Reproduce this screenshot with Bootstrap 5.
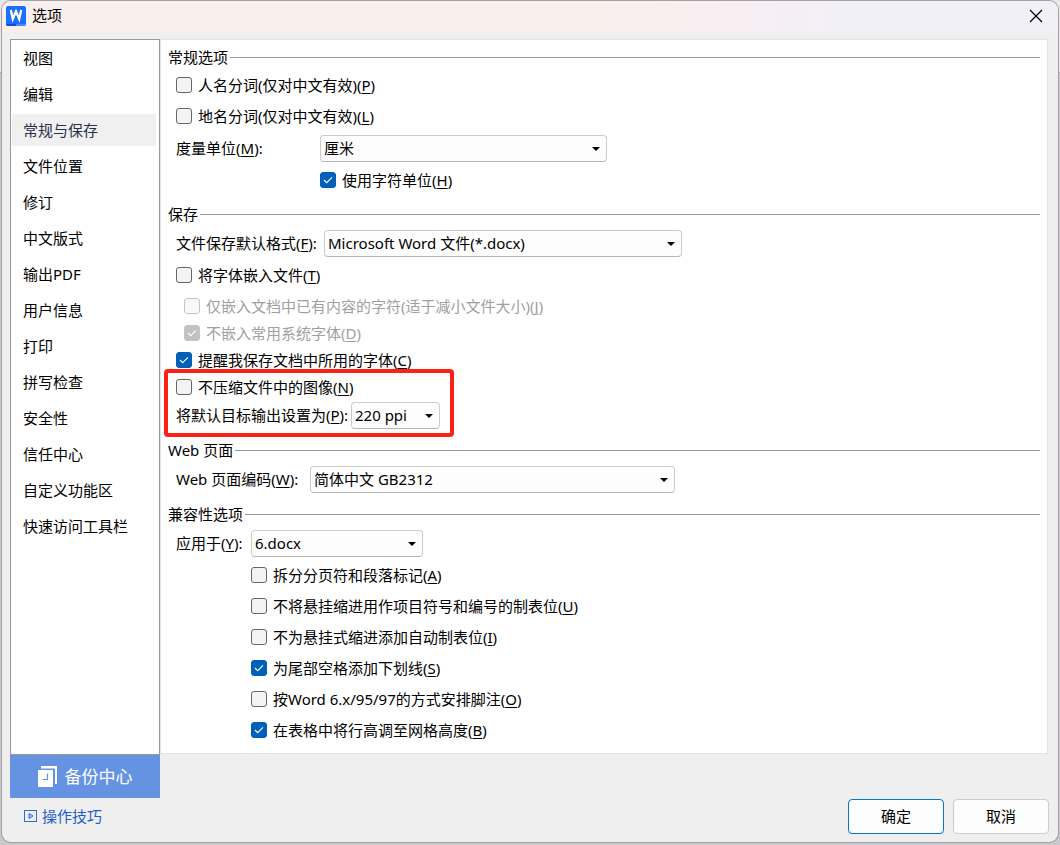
<!DOCTYPE html>
<html lang="zh-CN">
<head>
<meta charset="utf-8">
<meta name="viewport" content="width=device-width, initial-scale=1">
<title>选项</title>
<link href="https://cdn.jsdelivr.net/npm/bootstrap@5.3.0/dist/css/bootstrap.min.css" rel="stylesheet">
<style>
  body {
    font-family: "Noto Sans", "Noto Sans CJK SC", sans-serif;
    font-size: 15px;
    line-height: 20px;
    color: #000;
    padding: 1px 2px 3px;
    background: linear-gradient(#e9e8e9 72px, #a9a8aa 72px, #a9a8aa 73px, #c9c8ca 73px);
  }
  .dialog {
    min-height: calc(100vh - 4px);
    background: #efefef;
    border-radius: 9px;
    box-shadow: 0 0 0 1px #a3a1a3;
    overflow: hidden;
  }
  .titlebar {
    height: 31px;
    padding: 0 15px 2px 4px;
    background: linear-gradient(100deg, #f9f0ed 55%, #f9eef2 68%, #f1f0f7 80%);
  }
  .titlebar h1 { font-size: 15px; line-height: 20px; margin: 0 0 0 6px; padding-bottom: 2px; font-weight: 400; }
  .close-btn { border: 0; background: none; padding: 0; width: 14px; height: 30px; }
  .work { padding: 7px 10px 0 8px; }

  .side { width: 150px; }
  .cats { border: 1px solid #999; background: #fff; padding: 1px; }
  .cats .nav-link {
    color: #000;
    padding: 6px 11px;
    line-height: 20px;
    margin: 1px 2px 3px 0;
    border-radius: 0;
  }
  .cats .nav-link.active { background: #f0f0f0; color: #2a2f48; }
  .backup {
    height: 43px;
    border: 0;
    background: #6593e2;
    color: #fff;
    font-size: 17px;
    line-height: 24px;
  }
  .tips { height: 44px; padding: 0 0 8px 14px; color: #1f5fcb; text-decoration: none; gap: 4px; }

  .pane { background: #fff; border: 1px solid #e3e3e3; padding: 4px 7px 0; }
  .group { margin: 0 0 5px; }
  .group-title { height: 26px; margin: 0; font-size: 15px; line-height: 20px; font-weight: 400; white-space: nowrap; gap: 2px; }
  .group-title::after { content: ""; flex: 1; height: 1px; background: #999; }
  .rows { padding-left: 8px; }
  .tick { height: 31px; padding-bottom: 1px; gap: 6px; white-space: nowrap; }
  .tick.tight { height: 27px; }
  .tick.medium { height: 29px; padding-top: 1px; padding-bottom: 0; }
  .tick .form-check-input {
    width: 16px; height: 16px; margin: 0; flex: none;
    border: 1px solid #666; border-radius: 3px; background-color: #f3f3f3;
    opacity: 1;
  }
  .tick .form-check-input:checked {
    background-color: #005fb8; border-color: #005fb8;
    background-size: 16px 16px;
    background-image: url("data:image/svg+xml,%3Csvg xmlns='http://www.w3.org/2000/svg' viewBox='0 0 16 16'%3E%3Cpath d='M4 8l2.7 2.7L12 5.4' fill='none' stroke='%23fff' stroke-width='1.1'/%3E%3C/svg%3E");
  }
  .tick .form-check-input:disabled { border-color: #c4c4c4; background-color: #f9f9f9; }
  .tick .form-check-input:disabled:checked { background-color: #c1c1c1; }
  .tick .form-check-input:disabled ~ label { opacity: 1; color: #a0a0a0; }
  u { text-underline-offset: 2px; text-decoration-thickness: 1px; }
  .pick { padding: 3px 0; white-space: nowrap; }
  .pick label { padding-bottom: 2px; }
  .pick.snug { padding: 1px 0; }
  .pick .form-select {
    height: 27px;
    padding: 0 24px 1px 3px;
    font-size: 15px;
    line-height: 24px;
    color: #000;
    border: 1px solid #ccc;
    border-bottom-color: #b5b5b5;
    border-radius: 4px;
    background: #fdfdfd url("data:image/svg+xml,%3Csvg xmlns='http://www.w3.org/2000/svg' width='8' height='4'%3E%3Cpath d='M0 0h8L4 4z'/%3E%3C/svg%3E") no-repeat right 6px center / 8px 4px;
  }
  .unit label { width: 144px; }    .unit .form-select { width: 287px; }
  .format label { width: 148px; }  .format .form-select { width: 358px; }
  .ppi label { width: 175px; }     .ppi .form-select { width: 89px; }
  .enc label { width: 134px; }     .enc .form-select { width: 365px; }
  .target label { width: 75px; }   .target .form-select { width: 172px; }
  .under-unit { padding-left: 144px; }
  .under-embed { padding-left: 8px; }
  .under-target { padding-left: 75px; }

  .marked { position: relative; width: fit-content; margin-bottom: 7px; }
  .marked::after {
    content: "";
    position: absolute;
    inset: -5px -14px -7px -12px;
    border: 4px solid #ff2015;
    border-radius: 4px;
    pointer-events: none;
  }
  .actions { padding: 45px 0 8px; gap: 9px; margin-right: -1px; }
  .actions .btn {
    width: 96px; height: 35px; padding: 0 0 2px;
    font-size: 15px; line-height: 20px; color: #000;
    background: #fdfdfd; border: 1px solid #ccc; border-radius: 4px;
  }
  .actions .btn.default { border-color: #0078d4; }
</style>
</head>
<body>
<div class="dialog d-flex flex-column">
  <header class="titlebar d-flex align-items-center">
    <svg width="20" height="20" viewBox="0 0 20 20" aria-hidden="true">
      <rect width="20" height="20" rx="2" fill="#1d6ffb"/>
      <path d="M0 18h10v2H2a2 2 0 0 1-2-2z" fill="#0550dc"/>
      <path d="M10 18h10a2 2 0 0 1-2 2h-8z" fill="#4689ff"/>
      <path d="M4.800 4l2 9L10 5.500l3.200 7.500 2-9" fill="none" stroke="#fff" stroke-width="2.300"/>
    </svg>
    <h1>选项</h1>
    <button type="button" class="close-btn ms-auto d-flex align-items-center justify-content-center" aria-label="关闭">
      <svg width="14" height="14" viewBox="0 0 14 14"><path d="M1 1l12 12M13 1L1 13" stroke="#000" stroke-width="1.200"/></svg>
    </button>
  </header>

  <div class="work d-flex flex-grow-1">
    <aside class="side d-flex flex-column flex-shrink-0">
      <nav class="cats nav flex-column flex-nowrap flex-grow-1">
        <a class="nav-link" href="#">视图</a>
        <a class="nav-link" href="#">编辑</a>
        <a class="nav-link active" href="#" aria-current="page">常规与保存</a>
        <a class="nav-link" href="#">文件位置</a>
        <a class="nav-link" href="#">修订</a>
        <a class="nav-link" href="#">中文版式</a>
        <a class="nav-link" href="#">输出PDF</a>
        <a class="nav-link" href="#">用户信息</a>
        <a class="nav-link" href="#">打印</a>
        <a class="nav-link" href="#">拼写检查</a>
        <a class="nav-link" href="#">安全性</a>
        <a class="nav-link" href="#">信任中心</a>
        <a class="nav-link" href="#">自定义功能区</a>
        <a class="nav-link" href="#">快速访问工具栏</a>
      </nav>
      <button type="button" class="backup d-flex align-items-center justify-content-center gap-2">
        <svg width="19" height="21" viewBox="0 0 19 21" aria-hidden="true">
          <path d="M3 0h16v18h-2V2.500H3z" fill="#fff"/>
          <path d="M0 4h15v17H0z" fill="#fff"/>
          <path d="M9.500 7.500v6H4.500" fill="none" stroke="#6593e2" stroke-width="1.200"/>
        </svg>
        备份中心
      </button>
      <a class="tips d-flex align-items-center" href="#">
        <svg width="14" height="12" viewBox="0 0 14 12" aria-hidden="true">
          <rect x=".5" y=".5" width="12" height="11" fill="none" stroke="#2f6bd0"/>
          <path d="M5 3.500L9 6 5 8.500z" fill="#a9c3ee" stroke="#2f6bd0"/>
        </svg>
        操作技巧
      </a>
    </aside>

    <form class="d-flex flex-column flex-grow-1" onsubmit="return false">
      <div class="pane flex-grow-1">
        <section class="group">
          <h2 class="group-title d-flex align-items-center">常规选项</h2>
          <div class="rows">
            <div class="tick d-flex align-items-center"><input class="form-check-input" type="checkbox" id="person"><label for="person">人名分词(仅对中文有效)(<u>P</u>)</label></div>
            <div class="tick d-flex align-items-center"><input class="form-check-input" type="checkbox" id="place"><label for="place">地名分词(仅对中文有效)(<u>L</u>)</label></div>
            <div class="pick unit d-flex align-items-center"><label for="unit">度量单位(<u>M</u>):</label><select class="form-select" id="unit"><option>厘米</option></select></div>
            <div class="tick under-unit d-flex align-items-center"><input class="form-check-input" type="checkbox" id="charunit" checked><label for="charunit">使用字符单位(<u>H</u>)</label></div>
          </div>
        </section>

        <section class="group">
          <h2 class="group-title d-flex align-items-center">保存</h2>
          <div class="rows">
            <div class="pick format d-flex align-items-center"><label for="format">文件保存默认格式(<u>F</u>):</label><select class="form-select" id="format"><option>Microsoft Word 文件(*.docx)</option></select></div>
            <div class="tick d-flex align-items-center"><input class="form-check-input" type="checkbox" id="embed"><label for="embed">将字体嵌入文件(<u>T</u>)</label></div>
            <div class="tick medium under-embed d-flex align-items-center"><input class="form-check-input" type="checkbox" id="used" disabled><label for="used">仅嵌入文档中已有内容的字符(适于减小文件大小)(<u>J</u>)</label></div>
            <div class="tick tight under-embed d-flex align-items-center"><input class="form-check-input" type="checkbox" id="nosys" checked disabled><label for="nosys">不嵌入常用系统字体(<u>D</u>)</label></div>
            <div class="tick tight d-flex align-items-center"><input class="form-check-input" type="checkbox" id="remind" checked><label for="remind">提醒我保存文档中所用的字体(<u>C</u>)</label></div>
            <div class="marked">
              <div class="tick tight d-flex align-items-center"><input class="form-check-input" type="checkbox" id="nocomp"><label for="nocomp">不压缩文件中的图像(<u>N</u>)</label></div>
              <div class="pick snug ppi d-flex align-items-center"><label for="ppi">将默认目标输出设置为(<u>P</u>):</label><select class="form-select" id="ppi"><option>220 ppi</option></select></div>
            </div>
          </div>
        </section>

        <section class="group">
          <h2 class="group-title d-flex align-items-center">Web 页面</h2>
          <div class="rows">
            <div class="pick enc d-flex align-items-center"><label for="enc">Web 页面编码(<u>W</u>):</label><select class="form-select" id="enc"><option>简体中文 GB2312</option></select></div>
          </div>
        </section>

        <section class="group">
          <h2 class="group-title d-flex align-items-center">兼容性选项</h2>
          <div class="rows">
            <div class="pick target d-flex align-items-center"><label for="target">应用于(<u>Y</u>):</label><select class="form-select" id="target"><option>6.docx</option></select></div>
            <div class="under-target">
              <div class="tick d-flex align-items-center"><input class="form-check-input" type="checkbox" id="c1"><label for="c1">拆分分页符和段落标记(<u>A</u>)</label></div>
              <div class="tick d-flex align-items-center"><input class="form-check-input" type="checkbox" id="c2"><label for="c2">不将悬挂缩进用作项目符号和编号的制表位(<u>U</u>)</label></div>
              <div class="tick d-flex align-items-center"><input class="form-check-input" type="checkbox" id="c3"><label for="c3">不为悬挂式缩进添加自动制表位(<u>I</u>)</label></div>
              <div class="tick d-flex align-items-center"><input class="form-check-input" type="checkbox" id="c4" checked><label for="c4">为尾部空格添加下划线(<u>S</u>)</label></div>
              <div class="tick d-flex align-items-center"><input class="form-check-input" type="checkbox" id="c5"><label for="c5">按Word 6.x/95/97的方式安排脚注(<u>O</u>)</label></div>
              <div class="tick d-flex align-items-center"><input class="form-check-input" type="checkbox" id="c6" checked><label for="c6">在表格中将行高调至网格高度(<u>B</u>)</label></div>
            </div>
          </div>
        </section>
      </div>
      <div class="actions d-flex justify-content-end">
        <button type="submit" class="btn default">确定</button>
        <button type="button" class="btn">取消</button>
      </div>
    </form>
  </div>
</div>
<script src="https://cdn.jsdelivr.net/npm/bootstrap@5.3.0/dist/js/bootstrap.bundle.min.js"></script>
</body>
</html>
